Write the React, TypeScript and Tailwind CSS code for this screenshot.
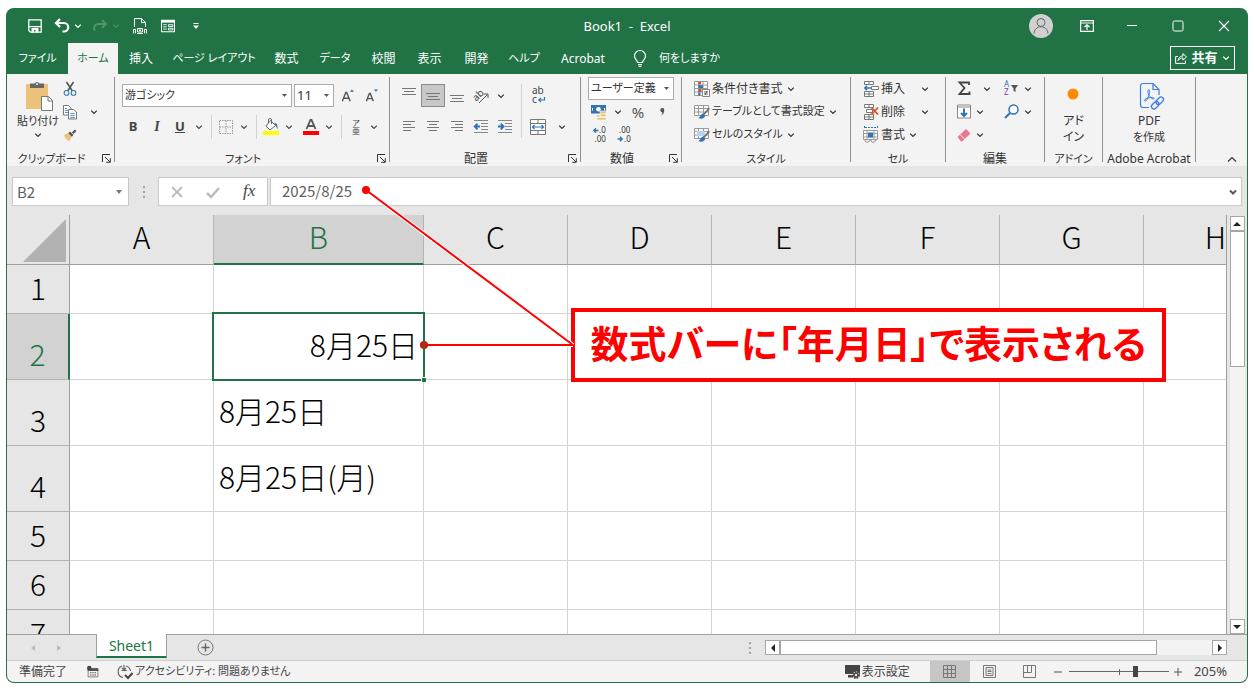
import { useState, type ReactNode } from 'react';

const tabs = [
  { label: 'ファイル', width: 'w-[61px] text-[11px]' },
  { label: 'ホーム', width: 'w-[50px] text-[11px]' },
  { label: '挿入', width: 'w-[46px]' },
  { label: 'ページ レイアウト', width: 'w-[100px] text-[11px]' },
  { label: '数式', width: 'w-[45px]' },
  { label: 'データ', width: 'w-[52px] text-[11px]' },
  { label: '校閲', width: 'w-[45px]' },
  { label: '表示', width: 'w-[47px]' },
  { label: '開発', width: 'w-[47px]' },
  { label: 'ヘルプ', width: 'w-[48px] text-[11px]' },
  { label: 'Acrobat', width: 'w-[70px]' },
];

const columns = ['A', 'B', 'C', 'D', 'E', 'F', 'G', 'H'];

const rows = [
  { n: 1, height: 'h-[49px]', value: '' },
  { n: 2, height: 'h-[66px]', value: '8月25日' },
  { n: 3, height: 'h-[66px]', value: '8月25日' },
  { n: 4, height: 'h-[66px]', value: '8月25日(月)' },
  { n: 5, height: 'h-[49px]', value: '' },
  { n: 6, height: 'h-[49px]', value: '' },
  { n: 7, height: 'h-[49px]', value: '' },
];

function Icon({ size = 'size-4', box = '0 0 16 16', children }: { size?: string; box?: string; children: ReactNode }) {
  return (
    <svg className={`${size} shrink-0 overflow-visible`} viewBox={box} fill="none" aria-hidden>
      {children}
    </svg>
  );
}

function Chevron() {
  return (
    <Icon size="size-2" box="0 0 8 8">
      <path d="M1.2 2.6 4 5.4 6.8 2.6" stroke="currentColor" strokeWidth="1.3" />
    </Icon>
  );
}

function Tool({ label, width = 'w-5', className = '', children }: { label: string; width?: string; className?: string; children: ReactNode }) {
  return (
    <button type="button" aria-label={label} className={`flex h-[23px] shrink-0 items-center justify-center ${width} ${className}`}>
      {children}
    </button>
  );
}

function More({ label, width = 'w-4' }: { label: string; width?: string }) {
  return (
    <Tool label={`${label}のオプション`} width={width}>
      <Chevron />
    </Tool>
  );
}

function Sep() {
  return <span className="mx-1 h-6 w-px shrink-0 bg-[#d2d2d2]" />;
}

function Group({ title, width, titleSize = 'text-xs', launcher, children }: { title: string; width: string; titleSize?: string; launcher?: boolean; children: ReactNode }) {
  return (
    <section className={`flex h-[85px] shrink-0 flex-col border-r border-[#8f8f8f] ${width}`}>
      <div className="h-[73px]">{children}</div>
      <div className={`relative h-3 whitespace-nowrap text-center leading-[18px] ${titleSize} ${launcher ? 'pr-[18px]' : ''}`}>
        {title}
        {launcher && (
          <button type="button" aria-label={`${title}の設定`} className="absolute right-[3px] top-1">
            <Icon size="size-[9px]" box="0 0 9 9">
              <path d="M.5 8V.5H8M3 3l5 5M8.3 4.2v4.1H4.2" stroke="#333" />
            </Icon>
          </button>
        )}
      </div>
    </section>
  );
}

function Combo({ label, value, className }: { label: string; value: string; className: string }) {
  return (
    <div className={`relative h-[23px] border border-[#ababab] bg-white ${className}`}>
      <select aria-label={label} className="block h-full w-full appearance-none bg-transparent pl-0.5 outline-none">
        <option>{value}</option>
      </select>
      <svg className="pointer-events-none absolute right-1 top-[9px] h-[3px] w-[5px]" viewBox="0 0 5 3" aria-hidden>
        <path d="M0 0h5L2.5 3z" fill="#555" />
      </svg>
    </div>
  );
}

function Lines({ rows: lengths, align }: { rows: number[]; align: 'left' | 'center' | 'right' }) {
  return (
    <Icon size="size-4">
      {lengths.map((len, i) => {
        const x = align === 'left' ? 2 : align === 'center' ? 8 - len / 2 : 14 - len;
        return <path key={i} d={`M${x} ${i * 3 + 2.5}h${len}`} stroke="#777" />;
      })}
    </Icon>
  );
}

function VLines({ y }: { y: number }) {
  return (
    <Icon size="size-4">
      <path d={`M1 ${y + 0.5}h14M3 ${y + 3.5}h10M1 ${y + 6.5}h14`} stroke="#777" />
    </Icon>
  );
}

function Indent({ out }: { out?: boolean }) {
  return (
    <Icon size="size-4">
      <path d="M1 1.5h14M8 4.5h7M8 7.5h7M8 10.5h7M1 13.5h14" stroke="#888" />
      <path d={out ? 'M7 7.5H2M4.5 4.7 1.7 7.5l2.8 2.8' : 'M1 7.5h5M3.8 4.7 6.6 7.5l-2.8 2.8'} stroke="#2f6fb3" strokeWidth="1.8" />
    </Icon>
  );
}

function TableIcon({ fill }: { fill?: boolean }) {
  return (
    <Icon size="size-4">
      <path d="M.5 1.5h14v10H.5zM.5 4.5h14M.5 8h14M4.5 1.5v10M9.5 1.5v10" stroke="#999" fill="#fff" />
      {fill && <path d="M3 4h8v5H3z" fill="#b9d3ee" />}
      <path d="m15.3 4.300-5.300 6" stroke="#666" strokeWidth="1.600" />
      <path d="M9.500 9.500c-2.500 0-3 3-5 4.800 3.500 1 6.500 0 6.800-3z" fill="#2f75b5" />
    </Icon>
  );
}

function QuickAccess() {
  return (
    <div className="flex items-center pl-[21px] text-white">
      <button type="button" aria-label="上書き保存">
        <Icon size="size-[14px]" box="0 0 14 14">
          <path d="M.8.800h12.400v12.400H2.500L.8 11.500z" stroke="currentColor" strokeWidth="1.300" />
          <path d="M.8 7h12.400v1.200H.8zM3.500 9h7v4.500H7.500V11H6v2.500H3.500z" fill="currentColor" />
        </Icon>
      </button>
      <button type="button" aria-label="元に戻す" className="ml-3">
        <Icon size="size-4">
          <path d="M6 1 2 5l4 4M2.500 5h7.500a4 4 0 0 1 0 8.500H8.500" stroke="currentColor" strokeWidth="2.200" />
        </Icon>
      </button>
      <More label="元に戻す" />
      <button type="button" aria-label="やり直し" className="ml-1.5 text-[#4f9470]">
        <Icon size="size-4">
          <path d="m10 2 4 4-4 4M13.500 6H6a4 4 0 0 0-3 6.500" stroke="currentColor" strokeWidth="2" />
        </Icon>
      </button>
      <span className="flex text-[#4f9470]">
        <More label="やり直し" />
      </span>
      <button type="button" aria-label="印刷プレビュー" className="ml-2">
        <Icon size="size-4">
          <path d="M2.500 9V.6h7L13.500 4.500V9M9.500.6v4h4" stroke="currentColor" />
          <path d="M1.500 15.400v-4h2v4M14.500 15.400v-4h-2v4M5.500 10.500h5v3.500h-5zM5 15.500h6" stroke="currentColor" />
          <circle cx="8" cy="12.300" r="1" fill="currentColor" />
        </Icon>
      </button>
      <button type="button" aria-label="フォーム" className="ml-3">
        <Icon size="h-3.5 w-4">
          <path d="M.6 1.500h14.800v13H.6zM.6 3h14.800" stroke="currentColor" strokeWidth="1.200" />
          <path d="M.6 1h14.800v3H.6z" fill="currentColor" />
          <path d="M2.500 6.500h4M2.500 9h4M2.500 11.500h4M8.500 6.500h5v2h-5zM8.500 10.500h5v2h-5z" stroke="currentColor" />
        </Icon>
      </button>
      <button type="button" aria-label="クイック アクセスのカスタマイズ" className="ml-4">
        <Icon size="size-2" box="0 0 8 8">
          <path d="M1.500 1.500h5" stroke="currentColor" />
          <path d="M1 3.500h6L4 7z" fill="currentColor" />
        </Icon>
      </button>
    </div>
  );
}

function TitleBar() {
  return (
    <header className="grid h-[35px] grid-cols-3 text-white">
      <QuickAccess />
      <h1 className="self-center whitespace-pre pt-0.5 text-center text-[13px]">{'Book1  -  Excel'}</h1>
      <div className="flex items-center justify-end pr-[17px]">
        <button type="button" aria-label="アカウント" className="mr-[27px]">
          <Icon size="size-6" box="0 0 24 24">
            <circle cx="12" cy="12" r="12" fill="#d0d0d0" />
            <circle cx="12" cy="8.500" r="4" stroke="#666" />
            <path d="M5 19.500c.5-9 13.500-9 14 0" stroke="#666" />
          </Icon>
        </button>
        <button type="button" aria-label="リボンの表示オプション" className="mr-8">
          <Icon size="h-3 w-3.5" box="0 0 14 12">
            <path d="M.6.6h12.800v10.800H.6zM.6 3h12.800M7 10V5M4.500 7 7 4.700 9.500 7" stroke="currentColor" strokeWidth="1.200" />
          </Icon>
        </button>
        <button type="button" aria-label="最小化" className="mr-[34px]">
          <Icon size="size-3" box="0 0 12 12">
            <path d="M1 5.500h10" stroke="currentColor" />
          </Icon>
        </button>
        <button type="button" aria-label="最大化" className="mr-[34px]">
          <Icon size="size-3" box="0 0 12 12">
            <rect x="1" y="1" width="10" height="10" rx="1.500" stroke="currentColor" />
          </Icon>
        </button>
        <button type="button" aria-label="閉じる">
          <Icon size="size-3" box="0 0 12 12">
            <path d="m1 1 10 10M11 1 1 11" stroke="currentColor" strokeWidth="1.200" />
          </Icon>
        </button>
      </div>
    </header>
  );
}

function TabBar() {
  const [active, setActive] = useState('ホーム');
  return (
    <nav className="flex h-[31px] text-white">
      {tabs.map((t) => (
        <button
          type="button"
          key={t.label}
          onClick={() => setActive(t.label)}
          className={`shrink-0 whitespace-nowrap ${t.width} ${active === t.label ? 'bg-[#f3f3f3] text-[#217346]' : ''}`}
        >
          {t.label}
        </button>
      ))}
      <button type="button" className="ml-[15px] flex items-center gap-3 whitespace-nowrap text-[11px]">
        <Icon size="h-[17px] w-3.5" box="0 0 14 17">
          <path d="M4.500 12.500c0-2.500-3-3-3-6.500a5.500 5.500 0 0 1 11 0c0 3.500-3 4-3 6.500zM5 14.500h4M5.500 16.300h3" stroke="currentColor" strokeWidth="1.200" />
        </Icon>
        何をしますか
      </button>
      <button type="button" className="ml-auto mr-3 mt-[3px] flex h-6 w-[65px] items-center justify-between border border-white px-1 text-[13px] font-bold">
        <Icon size="size-3" box="0 0 12 12">
          <path d="M3 4.500H.6v6.900h9.800V8.500M3 8.500c.5-3 2.500-4.500 5-4.500V1.500L11.500 5 8 8V6C6 6 4.500 6.500 3 8.500z" stroke="currentColor" />
        </Icon>
        共有
        <Chevron />
      </button>
    </nav>
  );
}

function ClipboardGroup() {
  return (
    <Group title="クリップボード" width="w-[108px]" titleSize="text-[11px]" launcher>
      <div className="flex h-full pl-[9px]">
        <button type="button" className="flex w-[44px] flex-col items-center whitespace-nowrap pt-1 leading-4">
          <Icon size="size-[30px]" box="0 0 30 30">
            <path d="M3 3h22v25H3z" fill="#ecc27a" />
            <path d="M7 2.500h4.500a2.800 2.800 0 0 1 5 0H21V7H7z" fill="#666" />
            <circle cx="14" cy="3" r="1" fill="#f3f3f3" />
            <path d="M18.500 15.500h7l4 4v10h-11zM25 15.500v4.500h4.500" fill="#fff" stroke="#777" />
          </Icon>
          <span className="mt-0.5 text-[11px]">貼り付け</span>
          <span className="mt-0.5"><Chevron /></span>
        </button>
        <div className="flex w-5 flex-col items-center">
          <Tool label="切り取り">
            <Icon size="size-3.5">
              <path d="m4 0 6.500 10M12 0 5.500 10" stroke="#555" strokeWidth="1.800" />
              <circle cx="4" cy="12.500" r="2.700" stroke="#2f75b5" strokeWidth="1.200" />
              <circle cx="12" cy="12.500" r="2.700" stroke="#2f75b5" strokeWidth="1.200" />
            </Icon>
          </Tool>
          <Tool label="コピー">
            <Icon>
              <path d="M1.500 1.500h5l2.500 2.500v7h-7.500z" fill="#fff" stroke="#777" />
              <path d="M6.500 5.500h5L14.500 8v7h-8z" fill="#fff" stroke="#777" />
              <path d="M3 4.500h2M3 6.500h3M3 8.500h3M8.300 9.500h4.500M8.300 11.500h4.500M8.300 13.500h4.500" stroke="#5b8fc7" />
            </Icon>
          </Tool>
          <Tool label="書式のコピー">
            <Icon size="size-3.5">
              <path d="M1 8 6 6l4 4-3 5c-2-1-5-4-6-7z" fill="#ecc27a" />
              <path d="m7 5 4 4M11 6l3.500-3.500" stroke="#555" strokeWidth="2.600" />
            </Icon>
          </Tool>
        </div>
        <div className="flex items-center pb-1">
          <More label="クリップボード" width="w-7" />
        </div>
      </div>
    </Group>
  );
}

function FontGroup() {
  return (
    <Group title="フォント" width="w-[275px]" titleSize="text-[11px]" launcher>
      <div className="pl-1.5 pt-[7px]">
        <div className="flex items-center pl-px">
          <Combo label="フォント" value="游ゴシック" className="w-[170px] text-[11px]" />
          <Combo label="フォント サイズ" value="11" className="ml-0.5 w-10 text-[13px]" />
          <Tool label="拡大" width="w-6" className="ml-0.5">
            <Icon size="size-3.5">
              <path d="m1.500 14 4-10h1l4 10M3 10.500h6" stroke="#555" strokeWidth="1.600" />
              <path d="m10 3 2.500-2.500L15 3z" fill="#2f75b5" />
            </Icon>
          </Tool>
          <Tool label="縮小" width="w-6">
            <Icon size="size-3.5">
              <path d="m1.500 14 3.500-9h1l3.500 9M3 11h5.500" stroke="#555" strokeWidth="1.600" />
              <path d="m10 .5 2.500 2.500L15 .5z" fill="#2f75b5" />
            </Icon>
          </Tool>
        </div>
        <div className="mt-2 flex items-center text-[13px] font-bold text-[#444]">
          <Tool label="太字" width="w-6">B</Tool>
          <Tool label="斜体" width="w-6">
            <em className="font-['Liberation_Serif',serif] text-sm">I</em>
          </Tool>
          <Tool label="下線" width="w-[22px]">
            <span className="underline">U</span>
          </Tool>
          <More label="下線" />
          <Sep />
          <Tool label="罫線">
            <Icon>
              <path d="M1.500 1.500h13v13h-13zM8 1.500v13M1.500 8h13" stroke="#999" strokeDasharray="1.500 1" />
            </Icon>
          </Tool>
          <More label="罫線" />
          <Sep />
          <Tool label="塗りつぶしの色">
            <Icon>
              <path d="m7.500 1.500 5 5-5.500 4.500L3 7zM5.500 4V1a1.500 1.500 0 0 1 3 0V5" fill="#fff" stroke="#666" />
              <path d="M11 4c3 0 4 2 3.500 6.500-1-2-1-3.500-3.500-6.500z" fill="#2f75b5" />
              <path d="M0 12h16v4H0z" fill="#ff0" />
            </Icon>
          </Tool>
          <More label="塗りつぶしの色" />
          <Tool label="フォントの色" className="ml-1">
            <Icon>
              <path d="m3.500 10 4-9h1l4 9M5 7h6" stroke="#555" strokeWidth="1.800" />
              <path d="M0 12h16v4H0z" fill="#f00" />
            </Icon>
          </Tool>
          <More label="フォントの色" />
          <Sep />
          <Tool label="ふりがな">
            <span className="flex flex-col text-[8px] font-normal leading-2">
              <span>ア</span>
              <span>亜</span>
            </span>
          </Tool>
          <More label="ふりがな" />
        </div>
      </div>
    </Group>
  );
}

function AlignGroup() {
  return (
    <Group title="配置" width="w-[191px]" launcher>
      <div className="flex pl-[7px] pt-[7px]">
        <div className="w-[120px]">
          <div className="flex">
            <Tool label="上揃え" width="w-6"><VLines y={0} /></Tool>
            <Tool label="上下中央揃え" width="w-6" className="border border-[#8a8a8a] bg-[#c8c8c8]"><VLines y={5} /></Tool>
            <Tool label="下揃え" width="w-6"><VLines y={7} /></Tool>
            <Tool label="方向" width="w-6">
              <Icon>
                <text x="0" y="10" fontSize="10" fill="#444" transform="rotate(-45 6 8)">ab</text>
                <path d="m6 15 8.500-8.500M11 6h4v4" stroke="#555" />
              </Icon>
            </Tool>
            <More label="方向" />
          </div>
          <div className="mt-2 flex">
            <Tool label="左揃え" width="w-6"><Lines rows={[12, 8, 12, 8]} align="left" /></Tool>
            <Tool label="中央揃え" width="w-6"><Lines rows={[12, 8, 12, 8]} align="center" /></Tool>
            <Tool label="右揃え" width="w-6"><Lines rows={[12, 8, 12, 8]} align="right" /></Tool>
            <Tool label="インデントを減らす" width="w-6"><Indent out /></Tool>
            <Tool label="インデントを増やす" width="w-6"><Indent /></Tool>
          </div>
        </div>
        <span className="mx-1 h-[54px] w-px bg-[#d2d2d2]" />
        <div>
          <Tool label="折り返して全体を表示する" width="w-6">
            <Icon>
              <text x="2" y="6" fontSize="10" fill="#444">ab</text>
              <text x="2" y="15" fontSize="10" fill="#444">c</text>
              <path d="M14.500 9v3H9M11 9.800 8.800 12l2.200 2.200" stroke="#2f75b5" strokeWidth="1.200" />
            </Icon>
          </Tool>
          <div className="mt-2 flex">
            <Tool label="セルを結合して中央揃え" width="w-6">
              <Icon>
                <path d="M.5.5h15v15H.5zM.5 4.500h15M.5 11.500h15M8 .5v4M8 11.500v4" fill="#fff" stroke="#777" />
                <path d="M2.500 8h11M4.500 6l-2 2 2 2M11.500 6l2 2-2 2" stroke="#2f75b5" strokeWidth="1.200" />
              </Icon>
            </Tool>
            <More label="セルを結合" width="w-6" />
          </div>
        </div>
      </div>
    </Group>
  );
}

function NumberGroup() {
  return (
    <Group title="数値" width="w-[101px]" launcher>
      <div className="px-[7px]">
        <Combo label="表示形式" value="ユーザー定義" className="w-full text-[11px]" />
        <div className="flex">
          <Tool label="通貨" width="w-[22px]">
            <Icon>
              <path d="M0 1h15v8.500H0z" fill="#2f75b5" />
              <path d="M1.500 4v2.500M13.500 4v2.500" stroke="#fff" />
              <circle cx="7.500" cy="5.300" r="2.300" fill="#fff" />
              <path d="M9 7h6v2.500H9zM9 10h6v2.500H9zM5 11h5v2H5zM6 13.500h9V16H6z" fill="#ecc27a" stroke="#fff" strokeWidth=".5" />
            </Icon>
          </Tool>
          <More label="通貨" />
          <Tool label="パーセント" width="w-6" className="text-[15px] text-[#555]">%</Tool>
          <Tool label="桁区切り" width="w-6">
            <Icon>
              <path d="M6.300 5.500a2 2 0 1 1 3.900 1c0 2-1 4-3 5 .7-1 1.200-2 1.200-3-1.500 0-2.100-1.500-2.100-3z" fill="#555" />
            </Icon>
          </Tool>
        </div>
        <div className="flex">
          <Tool label="小数点以下の表示桁数を増やす" width="w-6">
            <Icon>
              <text x="7" y="6" fontSize="8" fill="#333">.0</text>
              <text x="2.500" y="15" fontSize="8" fill="#333">.00</text>
              <path d="M6.500 3.500H1.500M4 1.300 1.800 3.500 4 5.700" stroke="#2f75b5" strokeWidth="1.400" />
            </Icon>
          </Tool>
          <Tool label="小数点以下の表示桁数を減らす" width="w-6">
            <Icon>
              <text x="3" y="6" fontSize="8" fill="#333">.00</text>
              <text x="8" y="15" fontSize="8" fill="#333">.0</text>
              <path d="M1.500 12h5M4 9.800 6.200 12 4 14.200" stroke="#2f75b5" strokeWidth="1.400" />
            </Icon>
          </Tool>
        </div>
      </div>
    </Group>
  );
}

function RowButton({ icon, label, size = 'text-xs', children }: { icon: ReactNode; label: string; size?: string; children?: ReactNode }) {
  return (
    <button type="button" className={`flex h-[23px] items-center whitespace-nowrap text-left ${size}`}>
      {icon}
      <span className="ml-0.5 mr-1">{label}</span>
      {children ?? <Chevron />}
    </button>
  );
}

function StyleGroup() {
  return (
    <Group title="スタイル" width="w-[169px]" titleSize="text-[11px]">
      <div className="flex flex-col pl-3">
        <RowButton
          label="条件付き書式"
          icon={
            <Icon>
              <path d="M.5.5h13v14H.5zM.5 4h13M.5 7.500h13M.5 11h13M4.500.5v14M9 .5v14" fill="#fff" stroke="#999" />
              <path d="M4.500 1H7v2.500H4.500zM4.500 8h3v3h-3z" fill="#d9512c" />
              <path d="M4.500 4.300h4.500v3H4.500zM4.500 11.500h2v3h-2z" fill="#2f75b5" />
              <path d="M8.500 8.500h7v7h-7z" fill="#fff" stroke="#888" />
              <path d="M10 11h4M10 13h4M13 9.800l-2 4.400" stroke="#444" strokeWidth=".8" />
            </Icon>
          }
        />
        <RowButton label="テーブルとして書式設定" size="text-[11px]" icon={<TableIcon />} />
        <RowButton label="セルのスタイル" size="text-[11px]" icon={<TableIcon fill />} />
      </div>
    </Group>
  );
}

function CellGroup() {
  return (
    <Group title="セル" width="w-[95px]" titleSize="text-[11px]">
      <div className="flex flex-col pl-3">
        <RowButton
          label="挿入"
          icon={
            <Icon>
              <path d="M1.500.5h9v3h-9zM6 .5v3M1.500 10.500h9v5h-9zM6 10.500v5M1.500 13h9M8.500 5.500h7v3h-7z" fill="#fff" stroke="#777" />
              <path d="M8 7H2M4 4.800 1.800 7 4 9.200" stroke="#2f75b5" strokeWidth="1.500" />
            </Icon>
          }
        >
          <span className="ml-3"><Chevron /></span>
        </RowButton>
        <RowButton
          label="削除"
          icon={
            <Icon>
              <path d="M1.500.5h9v3h-9zM6 .5v3M1.500 10.500h9v5h-9zM6 10.500v5M1.500 13h9M3.500 5.500h6v3h-6z" fill="#fff" stroke="#777" />
              <path d="m8.500 3.500 6.500 7M15 3.500l-6.500 7" stroke="#d9512c" strokeWidth="1.800" />
            </Icon>
          }
        >
          <span className="ml-3"><Chevron /></span>
        </RowButton>
        <RowButton
          label="書式"
          icon={
            <Icon>
              <path d="M1.500-1v3M14.500-1v3M2 .5h12" stroke="#2f75b5" strokeDasharray="2 1" />
              <path d="M.5 3.500h14v9H.5zM.5 6.500h14M.5 10h14M4 3.500v9M11 3.500v9" fill="#fff" stroke="#999" />
              <path d="M5 5.500h5v5H5z" fill="#2f75b5" />
              <path d="M2 13c0 3 4 3 5 0M8 13c0 3 4 3 5 0" stroke="#888" />
            </Icon>
          }
        />
      </div>
    </Group>
  );
}

function EditGroup() {
  return (
    <Group title="編集" width="w-[99px]">
      <div className="flex pl-2">
        <div className="w-12">
          <div className="flex">
            <Tool label="合計">
              <Icon>
                <path d="M13 4V1.500H3.500L8.500 7l-5 6H13.500v-2.500" stroke="#444" strokeWidth="1.800" />
              </Icon>
            </Tool>
            <More label="合計" width="w-[26px]" />
          </div>
          <div className="flex">
            <Tool label="フィル">
              <Icon>
                <path d="M1.500 1h13v13h-13zM1.500 3h13" fill="#fff" stroke="#888" />
                <path d="M8 4.500V12M5 9l3 3 3-3" stroke="#2f75b5" strokeWidth="2" />
              </Icon>
            </Tool>
            <More label="フィル" width="w-3" />
          </div>
          <div className="flex">
            <Tool label="クリア">
              <Icon>
                <path d="m1.500 10 8.500-8 4.500 4.500-8.500 8H5z" fill="#e8788f" />
                <path d="m4 7.500 5 5" stroke="#f3f3f3" />
              </Icon>
            </Tool>
            <More label="クリア" width="w-3" />
          </div>
        </div>
        <div>
          <div className="flex">
            <Tool label="並べ替えとフィルター">
              <Icon>
                <text x="0" y="6" fontSize="8" fill="#2f75b5">A</text>
                <text x="0" y="14" fontSize="8" fill="#8a3fa0">Z</text>
                <path d="M7 4h7l-2.500 3.500V11l-2-1V7.500z" fill="#555" />
              </Icon>
            </Tool>
            <More label="並べ替え" width="w-3" />
          </div>
          <div className="flex">
            <Tool label="検索と選択">
              <Icon>
                <circle cx="9.500" cy="5.500" r="4.500" stroke="#2f75b5" strokeWidth="1.500" fill="#fff" />
                <path d="m6 9-5 5" stroke="#2f75b5" strokeWidth="2" />
              </Icon>
            </Tool>
            <More label="検索" width="w-3" />
          </div>
        </div>
      </div>
    </Group>
  );
}

function Ribbon() {
  return (
    <div className="flex h-[92px] bg-[#f3f3f3] pt-[3px]">
      <ClipboardGroup />
      <FontGroup />
      <AlignGroup />
      <NumberGroup />
      <StyleGroup />
      <CellGroup />
      <EditGroup />
      <Group title="アドイン" width="w-[58px]" titleSize="text-[11px]">
        <button type="button" className="flex w-full flex-col items-center pt-1 leading-4">
          <Icon size="size-8" box="0 0 32 32">
            <circle cx="15" cy="13" r="5.500" fill="#ff8c00" />
          </Icon>
          <span>アド</span>
          <span>イン</span>
        </button>
      </Group>
      <Group title="Adobe Acrobat" width="w-[93px]">
        <button type="button" className="flex w-full flex-col items-center pt-1 leading-4">
          <Icon size="size-8" box="0 0 32 32">
            <path d="M16 26.500h-6A2.500 2.500 0 0 1 7.500 24V5A2.500 2.500 0 0 1 10 2.500h10l6 6V14M20 2.500v6h6" stroke="#3c7be0" strokeWidth="1.200" />
            <path d="M12 20c-2.500-1 2-3 6-3.500 4.500 0 4 2.500 1 1-3-2-4.500-5-4-8 .7-2 2-.5 1.500 2-.8 3.500-2.500 9-4.500 8.500z" stroke="#3c7be0" />
            <rect x="24" y="15.500" width="5" height="8.500" rx="2.500" transform="rotate(45 26.500 20)" stroke="#3c7be0" strokeWidth="1.300" />
            <rect x="19.500" y="20" width="5" height="8.500" rx="2.500" transform="rotate(45 22 24.500)" stroke="#3c7be0" strokeWidth="1.300" />
          </Icon>
          <span>PDF</span>
          <span className="text-[11px]">を作成</span>
        </button>
      </Group>
      <button type="button" aria-label="リボンを折りたたむ" className="ml-auto mr-2.5 self-end pb-[3px]">
        <Icon size="h-2 w-2.5" box="0 0 10 8">
          <path d="M1 6.500 5 2.500l4 4" stroke="#333" strokeWidth="1.200" />
        </Icon>
      </button>
    </div>
  );
}

function FormulaBar() {
  return (
    <div className="flex h-[49px] bg-[#e6e6e6] px-[5px] pb-[9px] pt-[11px] font-['Noto_Sans_CJK_JP',sans-serif] text-[15px] text-[#5f5f5f]">
      <div className="flex w-[117px] items-center border border-[#c9c9c9] bg-white pr-1.5">
        <input aria-label="名前ボックス" defaultValue="B2" className="w-full min-w-0 pl-1 outline-none" />
        <Icon size="h-1 w-1.5" box="0 0 6 4">
          <path d="M0 0h6L3 4z" fill="#777" />
        </Icon>
      </div>
      <div className="flex w-[29px] items-center justify-center">
        <Icon size="h-3 w-0.5" box="0 0 2 12">
          <path d="M0 0h2v2H0zM0 5h2v2H0zM0 10h2v2H0z" fill="#a0a0a0" />
        </Icon>
      </div>
      <div className="flex w-[110px] items-center justify-around border border-[#c9c9c9] bg-white">
        <button type="button" aria-label="キャンセル">
          <Icon size="size-3" box="0 0 12 12">
            <path d="m1 1 10 10M11 1 1 11" stroke="#bbb" strokeWidth="1.800" />
          </Icon>
        </button>
        <button type="button" aria-label="入力">
          <Icon size="size-3.5" box="0 0 14 14">
            <path d="m1 8 4 4 8-9" stroke="#bbb" strokeWidth="2.500" />
          </Icon>
        </button>
        <button type="button" className="font-['Liberation_Serif',serif] text-[17px] italic text-[#444]">fx</button>
      </div>
      <div className="ml-0.5 flex flex-1 items-center border border-[#c9c9c9] bg-white pr-1">
        <input aria-label="数式バー" defaultValue="2025/8/25" className="w-full min-w-0 pb-0.5 pl-[11px] outline-none" />
        <Icon size="size-2" box="0 0 8 8">
          <path d="M1 2.500 4 5.500l3-3" stroke="#555" strokeWidth="2" />
        </Icon>
      </div>
    </div>
  );
}

function Sheet() {
  return (
    <div className="min-w-0 flex-1 overflow-hidden border-r border-[#a0a0a0] bg-white font-['Noto_Sans_CJK_JP',sans-serif] text-[30px] font-light leading-9 text-black [font-feature-settings:normal]">
      <table className="w-[1281px] table-fixed border-separate border-spacing-0">
        <colgroup>
          <col className="w-[63px]" />
          {columns.map((c) => (
            <col key={c} className={c === 'B' ? 'w-[210px]' : 'w-36'} />
          ))}
        </colgroup>
        <thead>
          <tr className="h-[50px]">
            <th className="border-b border-r border-[#9f9f9f] bg-[#e6e6e6] pl-4 pt-px">
              <Icon size="size-[43px]" box="0 0 43 43">
                <path d="M43 0v43H0z" fill="#b2b2b2" />
              </Icon>
            </th>
            {columns.map((c) => (
              <th
                key={c}
                scope="col"
                className={
                  c === 'B'
                    ? 'border-b-2 border-r border-b-[#217346] border-r-[#b4b4b4] bg-[#d2d2d2] pb-1.5 font-light text-[#217346]'
                    : 'border-b border-r border-b-[#9f9f9f] border-r-[#b4b4b4] bg-[#e6e6e6] pb-[7px] font-light'
                }
              >
                {c}
              </th>
            ))}
          </tr>
        </thead>
        <tbody>
          {rows.map((r) => (
            <tr key={r.n} className={r.height}>
              <th
                scope="row"
                className={
                  r.n === 2
                    ? 'border-b border-r-2 border-b-[#b4b4b4] border-r-[#217346] bg-[#d2d2d2] pb-2 align-bottom font-light text-[#217346]'
                    : 'border-b border-r border-b-[#b4b4b4] border-r-[#9f9f9f] bg-[#e6e6e6] pb-2 align-bottom font-light'
                }
              >
                {r.n}
              </th>
              {columns.map((c) => {
                const selected = c === 'B' && r.n === 2;
                return (
                  <td key={c} className={`relative border-b border-r border-[#d4d4d4] px-[5px] pb-1.5 ${selected ? 'z-10 text-right' : ''}`}>
                    {c === 'B' && r.value}
                    {selected && (
                      <>
                        <span className="absolute -inset-0.5 border-2 border-[#217346]" />
                        <span className="absolute -bottom-[3px] -right-[3px] size-[5px] border-l border-t border-white bg-[#217346]" />
                      </>
                    )}
                  </td>
                );
              })}
            </tr>
          ))}
        </tbody>
      </table>
    </div>
  );
}

function ScrollArrow({ label, d, className }: { label: string; d: string; className: string }) {
  return (
    <button type="button" aria-label={label} className={`flex size-[15px] shrink-0 items-center justify-center border border-[#a6a6a6] bg-white ${className}`}>
      <Icon size="size-2" box="0 0 8 8">
        <path d={d} fill="#222" />
      </Icon>
    </button>
  );
}

function SheetTabs() {
  return (
    <div className="flex h-[26px] border-t border-[#a0a0a0] bg-[#e6e6e6]">
      <div className="flex w-[89px] items-center gap-5 pl-[23px]">
        <button type="button" aria-label="前のシート">
          <Icon size="size-1.5" box="0 0 6 6"><path d="M5 0v6L1 3z" fill="#bcbcbc" /></Icon>
        </button>
        <button type="button" aria-label="次のシート">
          <Icon size="size-1.5" box="0 0 6 6"><path d="M1 0v6l4-3z" fill="#bcbcbc" /></Icon>
        </button>
      </div>
      <button type="button" className="-mt-px h-6 w-[71px] border-x border-b-2 border-x-[#a0a0a0] border-b-[#217346] bg-white pt-0.5 text-sm text-[#217346]">
        Sheet1
      </button>
      <button type="button" aria-label="新しいシート" className="ml-[30px]">
        <Icon size="size-[17px]" box="0 0 17 17">
          <circle cx="8.500" cy="8.500" r="7.500" stroke="#777" />
          <path d="M8.500 4.500v8M4.500 8.500h8" stroke="#666" strokeWidth="1.500" />
        </Icon>
      </button>
      <div className="ml-auto mr-5 flex items-center gap-[14px]">
        <Icon size="h-3 w-0.5" box="0 0 2 12">
          <path d="M0 0h2v2H0zM0 5h2v2H0zM0 10h2v2H0z" fill="#a0a0a0" />
        </Icon>
        <div className="flex w-[462px] bg-[#f3f3f3]">
          <ScrollArrow label="左へスクロール" d="M6 0v8L2 4z" className="" />
          <span className="h-[15px] w-[377px] border border-[#a6a6a6] bg-white" />
          <ScrollArrow label="右へスクロール" d="M2 0v8l4-4z" className="ml-auto" />
        </div>
      </div>
    </div>
  );
}

function StatusBar() {
  const [zoom, setZoom] = useState(68);
  return (
    <footer className="flex h-[22px] items-center border-t border-[#d0d0d0] bg-[#f3f3f3] pl-3 text-[#444]">
      <span>準備完了</span>
      <span className="ml-5">
        <Icon size="size-3">
          <path d="M1.500 3.500h13v11h-13z" stroke="#777" strokeWidth="1.200" />
          <path d="M4 9h2M7 9h2M10 9h2M4 12h2M7 12h2M10 12h2" stroke="#555" strokeWidth="1.400" />
          <path d="M1 3h14v3.500H1z" fill="#555" />
          <circle cx="3" cy="2.500" r="3" fill="#444" />
        </Icon>
      </span>
      <button type="button" className="ml-[18px] flex items-center gap-0.5 text-[11px]">
        <Icon>
          <path d="M5 2a6 6 0 0 0 1 11.500M9 2a6 6 0 0 1 4.500 5M7 1v5l-2-2M7 6l2-2M4.500 6.500H10" stroke="#666" strokeWidth="1.200" />
          <path d="m8 11 3 3 4.500-5" stroke="#444" strokeWidth="2" />
        </Icon>
        アクセシビリティ: 問題ありません
      </button>
      <button type="button" className="ml-auto mr-5 flex items-center gap-px">
        <Icon>
          <path d="M0 1h15v9H0zM3 11h5v2.500H3z" fill="#444" />
          <circle cx="11" cy="11" r="3.200" fill="#444" stroke="#f3f3f3" />
          <circle cx="11" cy="11" r="3" stroke="#444" strokeWidth="2" strokeDasharray="1.500 1" />
          <circle cx="11" cy="11" r="1.200" fill="#f3f3f3" />
        </Icon>
        表示設定
      </button>
      <button type="button" aria-label="標準" className="flex h-full w-10 items-center justify-center bg-[#c6c6c6]">
        <Icon size="size-[13px]" box="0 0 13 13">
          <path d="M.5.5h12v12H.5zM.5 4.500h12M.5 8.500h12M4.500.5v12M8.500.5v12" stroke="#777" />
        </Icon>
      </button>
      <button type="button" aria-label="ページ レイアウト" className="flex w-10 justify-center">
        <Icon size="size-[13px]" box="0 0 13 13">
          <path d="M.5.5h12v12H.5zM3 2.500h7v8H3zM4.500 5h4M4.500 6.500h4M4.500 8.500h4" stroke="#777" />
        </Icon>
      </button>
      <button type="button" aria-label="改ページ プレビュー" className="flex w-10 justify-center">
        <Icon size="size-[13px]" box="0 0 13 13">
          <path d="M.5.5h12v12H.5zM4.500.5v7M8.500.5v7M.5 7.500h8" stroke="#777" />
        </Icon>
      </button>
      <button type="button" aria-label="縮小" className="flex w-4 justify-center">
        <Icon size="size-2" box="0 0 8 8"><path d="M0 4h8" stroke="#555" /></Icon>
      </button>
      <div className="relative mx-[3px] flex h-4 w-[100px] items-center">
        <span className="absolute left-1/2 top-1/2 h-1.5 w-px -translate-y-1/2 bg-[#666]" />
        <input
          type="range"
          aria-label="ズーム"
          value={zoom}
          onChange={(e) => setZoom(Number(e.target.value))}
          className="relative h-4 w-full appearance-none bg-transparent [&::-webkit-slider-runnable-track]:h-px [&::-webkit-slider-runnable-track]:bg-[#666] [&::-webkit-slider-thumb]:-mt-[5px] [&::-webkit-slider-thumb]:h-[11px] [&::-webkit-slider-thumb]:w-[5px] [&::-webkit-slider-thumb]:appearance-none [&::-webkit-slider-thumb]:bg-[#444]"
        />
      </div>
      <button type="button" aria-label="拡大" className="flex w-3 justify-center">
        <Icon size="size-2" box="0 0 8 8"><path d="M0 4h8M4 0v8" stroke="#555" /></Icon>
      </button>
      <span className="ml-2.5 mr-5 text-[13px]">205%</span>
    </footer>
  );
}

export default function App() {
  return (
    <div className="relative h-screen min-h-[480px] overflow-hidden bg-white px-1.5 pb-1.5 pt-2 font-['Noto_Sans','Noto_Sans_CJK_JP',sans-serif] text-xs text-[#333] [font-feature-settings:'palt']">
      <div className="flex h-full flex-col overflow-hidden rounded-lg border-x border-b border-[#217346] bg-[#217346]">
        <TitleBar />
        <TabBar />
        <Ribbon />
        <FormulaBar />
        <main className="flex min-h-0 flex-1 bg-[#e6e6e6]">
          <Sheet />
          <div className="flex w-5 flex-col items-center bg-[#e6e6e6]">
            <ScrollArrow label="上へスクロール" d="M0 6h8L4 2z" className="mt-px" />
            <div className="flex w-[15px] flex-1 flex-col bg-[#f3f3f3]">
              <span className="h-[136px] w-full border border-[#a6a6a6] bg-white" />
            </div>
            <ScrollArrow label="下へスクロール" d="M0 2h8L4 6z" className="" />
          </div>
        </main>
        <SheetTabs />
        <StatusBar />
      </div>

      {/* Annotation over the sheet */}
      <p className="absolute left-[571px] top-[308px] flex h-[74px] w-[595px] items-center justify-center whitespace-nowrap border-4 border-[#f00] bg-white pb-1.5 font-['Noto_Sans_CJK_JP',sans-serif] text-[38px] font-bold text-[#f00]">
        数式バーに「年月日」で表示される
      </p>
      <svg className="pointer-events-none absolute inset-0 h-full w-full" aria-hidden>
        <path d="M366 190 573 345M424 345h149" stroke="#fff" strokeWidth="4" />
        <path d="M366 190 573 345M424 345h149" stroke="#f00" strokeWidth="2" />
        <circle cx="366" cy="190" r="4" fill="#f00" />
        <circle cx="424" cy="345" r="4" fill="#f00" />
      </svg>
    </div>
  );
}
